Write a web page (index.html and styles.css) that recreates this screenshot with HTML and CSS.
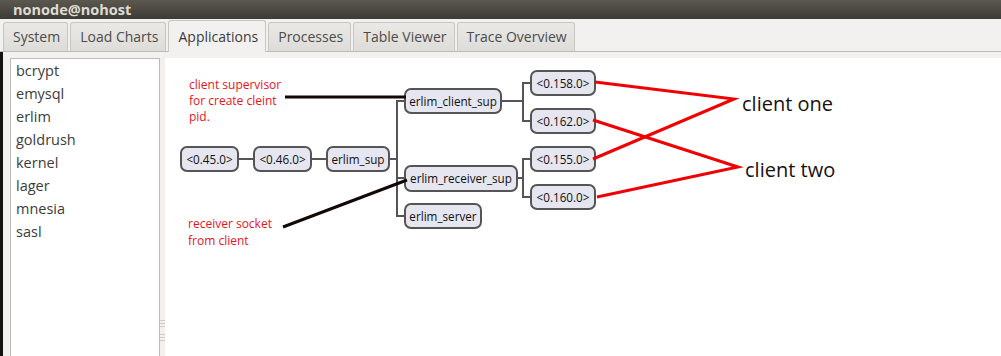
FILE: index.html
```html
<!DOCTYPE html>
<html>

<head>
    <title>nonode@nohost</title>
    <link rel="stylesheet" href="styles.css">
</head>

<body>
    <div class="window">
        <div class="titlebar">nonode@nohost</div>
        <ul class="tabs">
            <li>System</li>
            <li>Load Charts</li>
            <li class="active">Applications</li>
            <li>Processes</li>
            <li>Table Viewer</li>
            <li>Trace Overview</li>
        </ul>
        <div class="main">
            <ul class="app-list">
                <li>bcrypt</li>
                <li>emysql</li>
                <li>erlim</li>
                <li>goldrush</li>
                <li>kernel</li>
                <li>lager</li>
                <li>mnesia</li>
                <li>sasl</li>
            </ul>
            <div class="sash"><span class="grip"></span><span class="grip"></span></div>
            <div class="canvas">
                <svg class="tree" viewBox="165 58 836 298" width="836" height="298">
                    <!-- connectors -->
                    <g class="link">
                        <line x1="238" y1="159" x2="253" y2="159" />
                        <line x1="311" y1="159" x2="326" y2="159" />
                        <line x1="389" y1="159" x2="397" y2="159" />
                        <polyline points="405,101 397,101 397,216 405,216" />
                        <line x1="397" y1="178" x2="405" y2="178" />
                        <line x1="501" y1="101" x2="523" y2="101" />
                        <polyline points="530,83 523,83 523,121 530,121" />
                        <line x1="517" y1="178" x2="523" y2="178" />
                        <polyline points="530,159 523,159 523,197 530,197" />
                    </g>

                    <!-- nodes -->
                    <g class="node">
                        <rect x="181" y="147" width="57" height="24" rx="6" />
                        <text x="209.5" y="163.5">&lt;0.45.0&gt;</text>
                        <rect x="254" y="147" width="57" height="24" rx="6" />
                        <text x="282.5" y="163.5">&lt;0.46.0&gt;</text>
                        <rect x="327" y="147" width="62" height="24" rx="6" />
                        <text x="358" y="163.5">erlim_sup</text>

                        <rect x="405" y="89" width="96" height="24" rx="6" />
                        <text x="453" y="105.5">erlim_client_sup</text>
                        <rect x="405" y="166" width="112" height="25" rx="6" />
                        <text x="461" y="183">erlim_receiver_sup</text>
                        <rect x="405" y="204" width="76" height="24" rx="6" />
                        <text x="443" y="220.5">erlim_server</text>

                        <rect x="531" y="71" width="64" height="24" rx="6" />
                        <text x="563" y="87.5">&lt;0.158.0&gt;</text>
                        <rect x="531" y="109" width="64" height="24" rx="6" />
                        <text x="563" y="125.5">&lt;0.162.0&gt;</text>
                        <rect x="531" y="147" width="64" height="24" rx="6" />
                        <text x="563" y="163.5">&lt;0.155.0&gt;</text>
                        <rect x="531" y="185" width="64" height="24" rx="6" />
                        <text x="563" y="201.5">&lt;0.160.0&gt;</text>
                    </g>

                    <!-- notes -->
                    <g class="pointer">
                        <line x1="285" y1="97" x2="406" y2="97" />
                        <line x1="283" y1="227" x2="407" y2="180" />
                    </g>
                    <g class="mark">
                        <polyline points="595,82 734,99 593,159" />
                        <polyline points="593,120 738,167 597,197" />
                    </g>
                    <g class="note">
                        <text x="189" y="89">client supervisor</text>
                        <text x="189" y="105">for create cleint</text>
                        <text x="189" y="121">pid.</text>
                        <text x="188" y="228">receiver socket</text>
                        <text x="188" y="245">from client</text>
                    </g>
                    <g class="label">
                        <text x="742" y="111">client one</text>
                        <text x="745" y="177">client two</text>
                    </g>
                </svg>
            </div>
        </div>
    </div>
</body>

</html>
```

FILE: styles.css
```css
        html, body{
            margin: 0;
            padding: 0;
        }
        body{
            width: 1001px;
            height: 356px;
            overflow: hidden;
            background-color: #f2f1f0;
            font-family: "Open Sans", "Noto Sans", sans-serif;
        }
        .window{
            display: flex;
            flex-direction: column;
            height: 356px;
        }
        .titlebar{
            height: 20px;
            line-height: 19px;
            padding-left: 13px;
            font-size: 14.5px;
            font-weight: bold;
            color: #dfdbd2;
            background: linear-gradient(#5b5850, #3d3b36);
        }
        .tabs{
            list-style: none;
            margin: 0;
            padding: 1px 0 0 3px;
            height: 31px;
            display: flex;
            align-items: flex-end;
            gap: 2px;
            border-bottom: 1px solid #bfbcb7;
            background-color: #f2f1f0;
        }
        .tabs li{
            height: 28px;
            line-height: 28px;
            padding: 0 7px 0 9px;
            font-size: 14px;
            color: #4c4c4c;
            border: 1px solid #c9c6c1;
            border-bottom: none;
            border-radius: 3px 3px 0 0;
            background: linear-gradient(#ebe9e6, #dedcd8);
        }
        .tabs li.active{
            line-height: 31px;
            color: #3c3c3c;
            background: #f2f1f0;
            margin-bottom: -1px;
            height: 31px;
        }
        .main{
            flex: 1;
            display: flex;
            padding-top: 6px;
            border-left: 3px solid #121212;
            padding-left: 7px;
        }
        .app-list{
            list-style: none;
            margin: 0;
            padding: 0 0 0 5px;
            width: 143px;
            background-color: #ffffff;
            border: 1px solid #bcbcbc;
            border-bottom: none;
        }
        .app-list li{
            height: 23px;
            line-height: 23px;
            font-size: 14.5px;
            color: #3c3c3c;
        }
        .sash{
            width: 5px;
            display: flex;
            flex-direction: column;
            gap: 7px;
            padding-top: 262px;
        }
        .grip{
            display: block;
            height: 7px;
            background: repeating-linear-gradient(#cfccc7 0 1px, transparent 1px 3px);
        }
        .canvas{
            flex: 1;
            background-color: #ffffff;
        }
        .tree{
            display: block;
        }
        .link line, .link polyline{
            stroke: #555555;
            stroke-width: 2;
            fill: none;
        }
        .node rect{
            fill: #e6e6f0;
            stroke: #555555;
            stroke-width: 2;
        }
        .node text{
            font-size: 11.7px;
            fill: #111111;
            text-anchor: middle;
        }
        .pointer line{
            stroke: #120808;
            stroke-width: 3;
        }
        .mark polyline{
            stroke: #f00000;
            stroke-width: 3;
            fill: none;
        }
        .note text{
            font-size: 12px;
            fill: #e8141c;
        }
        .label text{
            font-size: 20px;
            fill: #1a1010;
        }
```
